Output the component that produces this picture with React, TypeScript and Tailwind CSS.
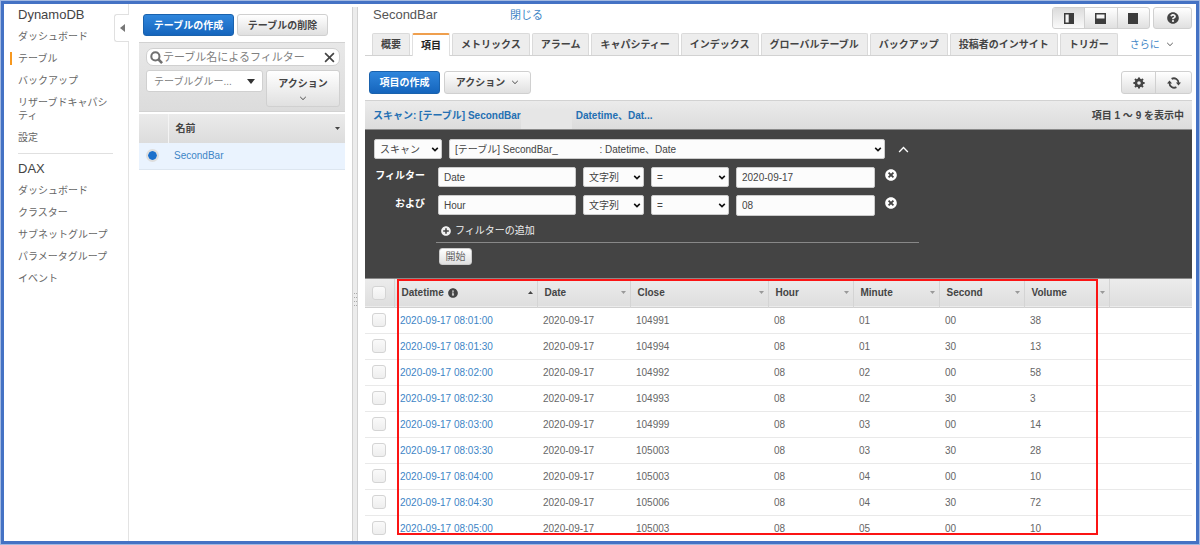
import type { ReactNode } from 'react'
import { useState } from 'react'
import clsx from 'clsx'
import { FaInfoCircle, FaPlusCircle, FaQuestionCircle, FaTimesCircle } from 'react-icons/fa'

const DYNAMO_LINKS = ['ダッシュボード', 'テーブル', 'バックアップ', 'リザーブドキャパシティ', '設定']
const DAX_LINKS = ['ダッシュボード', 'クラスター', 'サブネットグループ', 'パラメータグループ', 'イベント']

const TABS = [
  '概要',
  '項目',
  'メトリックス',
  'アラーム',
  'キャパシティー',
  'インデックス',
  'グローバルテーブル',
  'バックアップ',
  '投稿者のインサイト',
  'トリガー',
]

const COLUMNS = ['Datetime', 'Date', 'Close', 'Hour', 'Minute', 'Second', 'Volume']

const ROWS = [
  ['2020-09-17 08:01:00', '2020-09-17', '104991', '08', '01', '00', '38'],
  ['2020-09-17 08:01:30', '2020-09-17', '104994', '08', '01', '30', '13'],
  ['2020-09-17 08:02:00', '2020-09-17', '104992', '08', '02', '00', '58'],
  ['2020-09-17 08:02:30', '2020-09-17', '104993', '08', '02', '30', '3'],
  ['2020-09-17 08:03:00', '2020-09-17', '104999', '08', '03', '00', '14'],
  ['2020-09-17 08:03:30', '2020-09-17', '105003', '08', '03', '30', '28'],
  ['2020-09-17 08:04:00', '2020-09-17', '105003', '08', '04', '00', '10'],
  ['2020-09-17 08:04:30', '2020-09-17', '105006', '08', '04', '30', '72'],
  ['2020-09-17 08:05:00', '2020-09-17', '105003', '08', '05', '00', '10'],
]

const primaryButton =
  'flex items-center justify-center rounded-[3px] border border-[#1a62ad] bg-linear-to-b from-[#2f86dc] to-[#1565bd] font-bold text-white'
const plainButton =
  'flex items-center justify-center rounded-[3px] border border-[#d0d0d0] bg-linear-to-b from-white to-[#e0e0e0] font-bold text-[#444]'

function Chevron({ className, up, width = 1.2 }: { className?: string; up?: boolean; width?: number }) {
  return (
    <svg viewBox="0 0 10 6" className={className} fill="none" stroke="currentColor" strokeWidth={width}>
      <path d={up ? 'M1 5.2 5 1.2 9 5.2' : 'M1.5 1 5 4.4 8.5 1'} />
    </svg>
  )
}

function Triangle({ className, up }: { className?: string; up?: boolean }) {
  return (
    <svg viewBox="0 0 10 6" className={className} fill="currentColor">
      <path d={up ? 'M0 6 5 0 10 6Z' : 'M0 0h10L5 6Z'} />
    </svg>
  )
}

function NavList({ items, active }: { items: string[]; active?: string }) {
  return (
    <ul className="mt-[7px] flex flex-col gap-[9px]">
      {items.map((item) => (
        <li
          key={item}
          className={clsx('border-l-2 pr-4 pl-1.5', item === active ? 'border-[#f7981f]' : 'border-transparent')}
        >
          <a href="#" className="block leading-[13px] text-[#666]">
            {item}
          </a>
        </li>
      ))}
    </ul>
  )
}

function Sidebar() {
  return (
    <nav className="relative w-[125px] shrink-0 border-r border-[#e3e3e3] pt-[3px] pl-1.5">
      <h2 className="pl-2 text-[13px] leading-4 text-[#444]">DynamoDB</h2>
      <NavList items={DYNAMO_LINKS} active="テーブル" />
      <hr className="mt-[9px] mr-[15px] ml-2 border-[#e0e0e0]" />
      <h2 className="mt-[7px] pl-2 text-[13px] leading-4 text-[#444]">DAX</h2>
      <NavList items={DAX_LINKS} />
      <button
        aria-label="メニューを閉じる"
        className="absolute top-2.5 -right-px flex h-7 w-[15px] items-center justify-center rounded-l-[3px] border border-r-0 border-[#e0e0e0] bg-white text-[#777]"
      >
        <svg viewBox="0 0 5 8" className="h-2 w-[5px]" fill="currentColor">
          <path d="M5 0v8L0 4Z" />
        </svg>
      </button>
    </nav>
  )
}

function TablePanel() {
  return (
    <section className="w-[206px] shrink-0 pt-2.5">
      <div className="flex gap-[3px] pl-1">
        <button className={clsx(primaryButton, 'h-[22px] w-[91px]')}>テーブルの作成</button>
        <button className={clsx(plainButton, 'h-[22px] w-[91px]')}>テーブルの削除</button>
      </div>
      <div className="mt-1.5 h-[70px] border-t border-b border-[#d2d2d2] bg-linear-to-b from-[#e8e8e8] to-[#dcdcdc] pt-[5px] pr-[5px] pl-[7px]">
        <div className="flex h-[18px] items-center rounded-[7px] border border-[#d0d0d0] bg-white pr-1 pl-[3px]">
          <svg viewBox="0 0 14 14" className="size-[13px] shrink-0 text-[#707070]" fill="none" stroke="currentColor">
            <circle cx="5.8" cy="5.8" r="4.4" strokeWidth="2.2" />
            <path d="m9.2 9.2 3.8 3.8" strokeWidth="2.8" />
          </svg>
          <input
            aria-label="テーブル名によるフィルター"
            placeholder="テーブル名によるフィルター"
            className="h-4 min-w-0 flex-1 text-[11px] outline-none placeholder:text-[#808080]"
          />
          <button aria-label="クリア" className="text-[#444]">
            <svg viewBox="0 0 10 10" className="size-[11px]" fill="none" stroke="currentColor" strokeWidth="1.5">
              <path d="m1 1 8 8M9 1 1 9" />
            </svg>
          </button>
        </div>
        <div className="mt-1 flex items-start gap-[3px]">
          <div className="relative flex-1">
            <select
              aria-label="テーブルグループ"
              className="h-[22px] w-full appearance-none rounded-[3px] border border-[#d0d0d0] bg-white pl-[7px] text-[#808080]"
            >
              <option>テーブルグルー...</option>
            </select>
            <Triangle className="pointer-events-none absolute top-[9px] right-2 h-[5px] w-2 text-[#333]" />
          </div>
          <button className={clsx(plainButton, 'h-[37px] w-[74px] flex-col')}>
            <span className="leading-4">アクション</span>
            <Chevron className="mt-1 h-[5px] w-2" />
          </button>
        </div>
      </div>
      <table className="mt-0.5 w-full table-fixed text-left">
        <colgroup>
          <col className="w-[29px]" />
          <col />
        </colgroup>
        <thead>
          <tr className="h-[29px] bg-linear-to-b from-[#ebebeb] to-[#dcdcdc]">
            <th className="border-r border-[#f4f4f4]" />
            <th className="pr-[5px] pl-[7px] text-[#444]">
              <div className="flex items-center justify-between">
                名前
                <Triangle className="h-[3px] w-[5px]" />
              </div>
            </th>
          </tr>
        </thead>
        <tbody>
          <tr className="h-[26px] border-b border-[#dde6f0] bg-[#eaf3fe]">
            <td className="pl-[7px]">
              <input
                type="radio"
                name="table"
                aria-label="SecondBar"
                defaultChecked
                className="block size-[13px] appearance-none rounded-full border-2 border-[#dedede] bg-clip-padding checked:bg-[#1c70cb]"
              />
            </td>
            <td className="pl-1.5">
              <a href="#" className="text-[#3d85c6]">
                SecondBar
              </a>
            </td>
          </tr>
        </tbody>
      </table>
    </section>
  )
}

function Splitter() {
  return (
    <div className="mt-[3px] ml-[7px] flex w-[6px] shrink-0 flex-col items-center border-x border-[#d2d2d2] bg-[#ececec] pt-[286px]">
      <svg viewBox="0 0 3 13" className="h-[13px] w-[3px]" fill="#aaa">
        <path d="M0 0h1v1H0zM2 0h1v1H2zM0 4h1v1H0zM2 4h1v1H2zM0 8h1v1H0zM2 8h1v1H2zM0 12h1v1H0zM2 12h1v1H2z" />
      </svg>
    </div>
  )
}

function LayoutButtons() {
  const segment = 'flex flex-1 items-center justify-center text-[#3c3c3c]'
  return (
    <div className="flex gap-[3px]">
      <div className="flex h-[22px] w-[98px] overflow-hidden rounded-[3px] border border-[#d0d0d0] bg-linear-to-b from-white to-[#e0e0e0]">
        <button aria-label="左右に分割" className={clsx(segment, 'bg-linear-to-b from-[#dcdcdc] to-[#fafafa]')}>
          <svg viewBox="0 0 10 11" className="h-[11px] w-2.5">
            <path d="M0 0h10v11H0z" fill="currentColor" />
            <path d="M1.5 1.5h3.2v8H1.5z" fill="#f4f4f4" />
          </svg>
        </button>
        <button aria-label="上下に分割" className={clsx(segment, 'border-x border-[#d0d0d0]')}>
          <svg viewBox="0 0 11 11" className="size-[11px]">
            <path d="M0 0h11v11H0z" fill="currentColor" />
            <path d="M1.5 1.5h8v4h-8z" fill="#f4f4f4" />
          </svg>
        </button>
        <button aria-label="全画面" className={segment}>
          <svg viewBox="0 0 10 11" className="h-[11px] w-2.5">
            <path d="M0 0h10v11H0z" fill="currentColor" />
          </svg>
        </button>
      </div>
      <button aria-label="ヘルプ" className={clsx(plainButton, 'h-[22px] w-[39px]')}>
        <FaQuestionCircle className="size-3" />
      </button>
    </div>
  )
}

function TabBar() {
  const [current, setCurrent] = useState('項目')

  return (
    <div className="mt-1 flex h-[23px] items-end gap-0.5 border-b border-[#d2d2d2] pl-[7px] whitespace-nowrap">
      {TABS.map((tab) => (
        <button
          key={tab}
          onClick={() => setCurrent(tab)}
          className={clsx(
            'rounded-t-[2px] px-2 font-bold',
            tab === current
              ? '-mb-px h-[23px] border-x border-t-2 border-x-[#e0e0e0] border-t-[#ef9f4d] bg-white text-[#222]'
              : 'h-[22px] border border-b-0 border-[#dadada] bg-[#ededed] text-[#444]',
          )}
        >
          {tab}
        </button>
      ))}
      <button className="flex h-[22px] items-center gap-1.5 pl-2.5 text-[#3d85c6]">
        さらに
        <Chevron className="h-[5px] w-2 text-[#555]" />
      </button>
    </div>
  )
}

function Select({ label, className, children }: { label: string; className: string; children: ReactNode }) {
  return (
    <div className={clsx('relative h-5', className)}>
      <select
        aria-label={label}
        className="h-5 w-full appearance-none rounded-[2px] border border-[#ccc] bg-[#fcfcfc] pl-[5px] text-[#444]"
      >
        {children}
      </select>
      <Chevron width={2} className="pointer-events-none absolute top-2 right-[3px] h-[5px] w-2 text-[#111]" />
    </div>
  )
}

function FilterRow({ label, name, value }: { label: string; name: string; value: string }) {
  const field = 'rounded-[2px] border border-[#ccc] bg-[#fcfcfc] px-[5px] text-[#444]'
  return (
    <div className="mt-2 flex h-5 items-start gap-[7px]">
      <span className="mr-1.5 w-[51px] text-right leading-[18px] font-bold text-white">{label}</span>
      <input aria-label={`${label} 属性`} defaultValue={name} className={clsx(field, 'h-5 w-[138px]')} />
      <Select label={`${label} 型`} className="w-[61px]">
        <option>文字列</option>
      </Select>
      <Select label={`${label} 演算子`} className="w-[78px]">
        <option>=</option>
      </Select>
      <input aria-label={`${label} 値`} defaultValue={value} className={clsx(field, 'h-[21px] w-[139px]')} />
      <button aria-label="フィルターの削除" className="mt-0.5 ml-[3px] text-white">
        <FaTimesCircle className="size-3" />
      </button>
    </div>
  )
}

function ScanPanel() {
  return (
    <div className="h-[150px] border-y border-[#8a8a8a] bg-[#444] pt-[9px] pl-[9px]">
      <div className="flex items-center gap-[7px]">
        <Select label="操作" className="w-[68px]">
          <option>スキャン</option>
        </Select>
        <Select label="対象" className="w-[436px]">
          <option>{`[テーブル] SecondBar_${'\u00a0'.repeat(15)}: Datetime、Date`}</option>
        </Select>
        <button aria-label="折りたたむ" className="ml-1.5 text-white">
          <Chevron up className="h-[7px] w-[11px]" />
        </button>
      </div>
      <FilterRow label="フィルター" name="Date" value="2020-09-17" />
      <FilterRow label="および" name="Hour" value="08" />
      <div className="ml-[62px] w-[483px] border-b border-[#888] pt-2 pb-1">
        <button className="flex h-[15px] items-center gap-1 pl-[5px] text-[#f0f0f0]">
          <FaPlusCircle className="size-2.5" />
          フィルターの追加
        </button>
      </div>
      <button className="mt-[5px] ml-[65px] flex h-[17px] w-[33px] items-center justify-center rounded-[3px] border border-[#ccc] bg-linear-to-b from-white to-[#e0e0e0] text-[#666]">
        開始
      </button>
    </div>
  )
}

function RowCheckbox({ label }: { label: string }) {
  return (
    <input
      type="checkbox"
      aria-label={label}
      className="ml-[7px] block size-3.5 appearance-none rounded-[3px] border border-[#d4d4d4] bg-linear-to-b from-[#fafafa] to-[#eee] checked:bg-[#1c70cb]"
    />
  )
}

function ItemsTable() {
  return (
    <div className="relative">
      <table className="w-full table-fixed text-left">
        <colgroup>
          <col className="w-[29px]" />
          <col className="w-[143px]" />
          <col className="w-[93px]" />
          <col className="w-[138px]" />
          <col className="w-[85px]" />
          <col className="w-[86px]" />
          <col className="w-[85px]" />
          <col className="w-[85px]" />
          <col />
        </colgroup>
        <thead>
          <tr className="h-7 border-b border-[#d0d0d0] bg-linear-to-b from-[#ececec] to-[#dedede]">
            <th className="border-r border-[#d4d4d4]">
              <RowCheckbox label="すべて選択" />
            </th>
            {COLUMNS.map((column, i) => (
              <th key={column} className="border-r border-[#d4d4d4] pr-1 pl-[7px] text-[#444]">
                <div className="flex items-center gap-1">
                  {column}
                  {i === 0 && <FaInfoCircle className="size-2.5" />}
                  <Triangle up={i === 0} className={clsx('ml-auto h-[3px] w-[5px]', i > 0 && 'text-[#999]')} />
                </div>
              </th>
            ))}
            <th />
          </tr>
        </thead>
        <tbody>
          {ROWS.map((row) => (
            <tr key={row[0]} className="h-[26px] border-b border-[#e9e9e9] text-[#666]">
              <td>
                <RowCheckbox label={row[0]} />
              </td>
              {row.map((cell, i) => (
                <td key={i} className="pl-1.5">
                  {i === 0 ? (
                    <a href="#" className="text-[#3d85c6]">
                      {cell}
                    </a>
                  ) : (
                    cell
                  )}
                </td>
              ))}
              <td />
            </tr>
          ))}
        </tbody>
      </table>
      {/* highlight around the item data */}
      <div className="pointer-events-none absolute top-0 bottom-[7px] left-8 w-[701px] border-2 border-[#fb1414]" />
    </div>
  )
}

function Detail() {
  return (
    <main className="ml-[7px] min-w-0 flex-1 pt-[3px] pr-1">
      <header className="flex h-[22px] items-start">
        <h1 className="w-[137px] pl-2 text-[13px] leading-4 text-[#555]">SecondBar</h1>
        <a href="#" className="ml-2 text-[11px] leading-[17px] text-[#3d85c6]">
          閉じる
        </a>
        <div className="ml-auto">
          <LayoutButtons />
        </div>
      </header>
      <TabBar />
      <div className="mt-[15px] flex gap-1 pl-1">
        <button className={clsx(primaryButton, 'h-[23px] w-[71px]')}>項目の作成</button>
        <button className={clsx(plainButton, 'h-[23px] w-[87px] gap-1.5')}>
          アクション
          <Chevron className="h-[5px] w-2" />
        </button>
        <div className="ml-auto flex h-[23px] w-[71px] overflow-hidden rounded-[3px] border border-[#d0d0d0] bg-linear-to-b from-white to-[#e0e0e0] text-[#444]">
          <button aria-label="設定" className="flex w-[34px] items-center justify-center border-r border-[#d0d0d0]">
            <svg viewBox="0 0 12 12" className="size-3" fill="none" stroke="currentColor">
              <circle cx="6" cy="6" r="3.1" strokeWidth="2.6" />
              <path
                d="M6 .4v2M6 9.6v2M.4 6h2M9.6 6h2M2 2l1.4 1.4M8.6 8.6 10 10M10 2 8.6 3.4M3.4 8.6 2 10"
                strokeWidth="2"
              />
            </svg>
          </button>
          <button aria-label="更新" className="flex flex-1 items-center justify-center">
            <svg viewBox="0 0 14 12" className="h-3 w-3.5" fill="none" stroke="currentColor" strokeWidth="1.8">
              <path d="M4.6 1.9A4.6 4.6 0 0 1 11.5 6.2M9.4 10.1A4.6 4.6 0 0 1 2.5 5.8" />
              <path d="M8.9 5.6h5.1L11.5 8.6ZM0 6.4h5.1L2.5 3.4Z" fill="currentColor" stroke="none" />
            </svg>
          </button>
        </div>
      </div>
      <div className="mt-1.5 flex h-[29px] items-center border-t border-[#d2d2d2] bg-linear-to-b from-[#ebebeb] to-[#dcdcdc] px-2 font-bold">
        <span className="text-[#2470b3]">スキャン: [テーブル] SecondBar</span>
        <span className="h-5 w-[51px] self-end bg-[#e6e6e6]" />
        <span className="ml-1 text-[#2470b3]">Datetime、Dat...</span>
        <span className="ml-auto text-[#444]">項目 1 ～ 9 を表示中</span>
      </div>
      <ScanPanel />
      <ItemsTable />
    </main>
  )
}

export default function App() {
  return (
    <div className="h-screen overflow-hidden bg-[#a3b9e1] p-px font-['Liberation_Sans','Noto_Sans_CJK_JP',sans-serif] text-[10px]">
      <div className="flex h-full overflow-hidden border-3 border-[#4472c4] bg-white">
        <Sidebar />
        <div className="w-2.5 shrink-0" />
        <TablePanel />
        <Splitter />
        <Detail />
      </div>
    </div>
  )
}
